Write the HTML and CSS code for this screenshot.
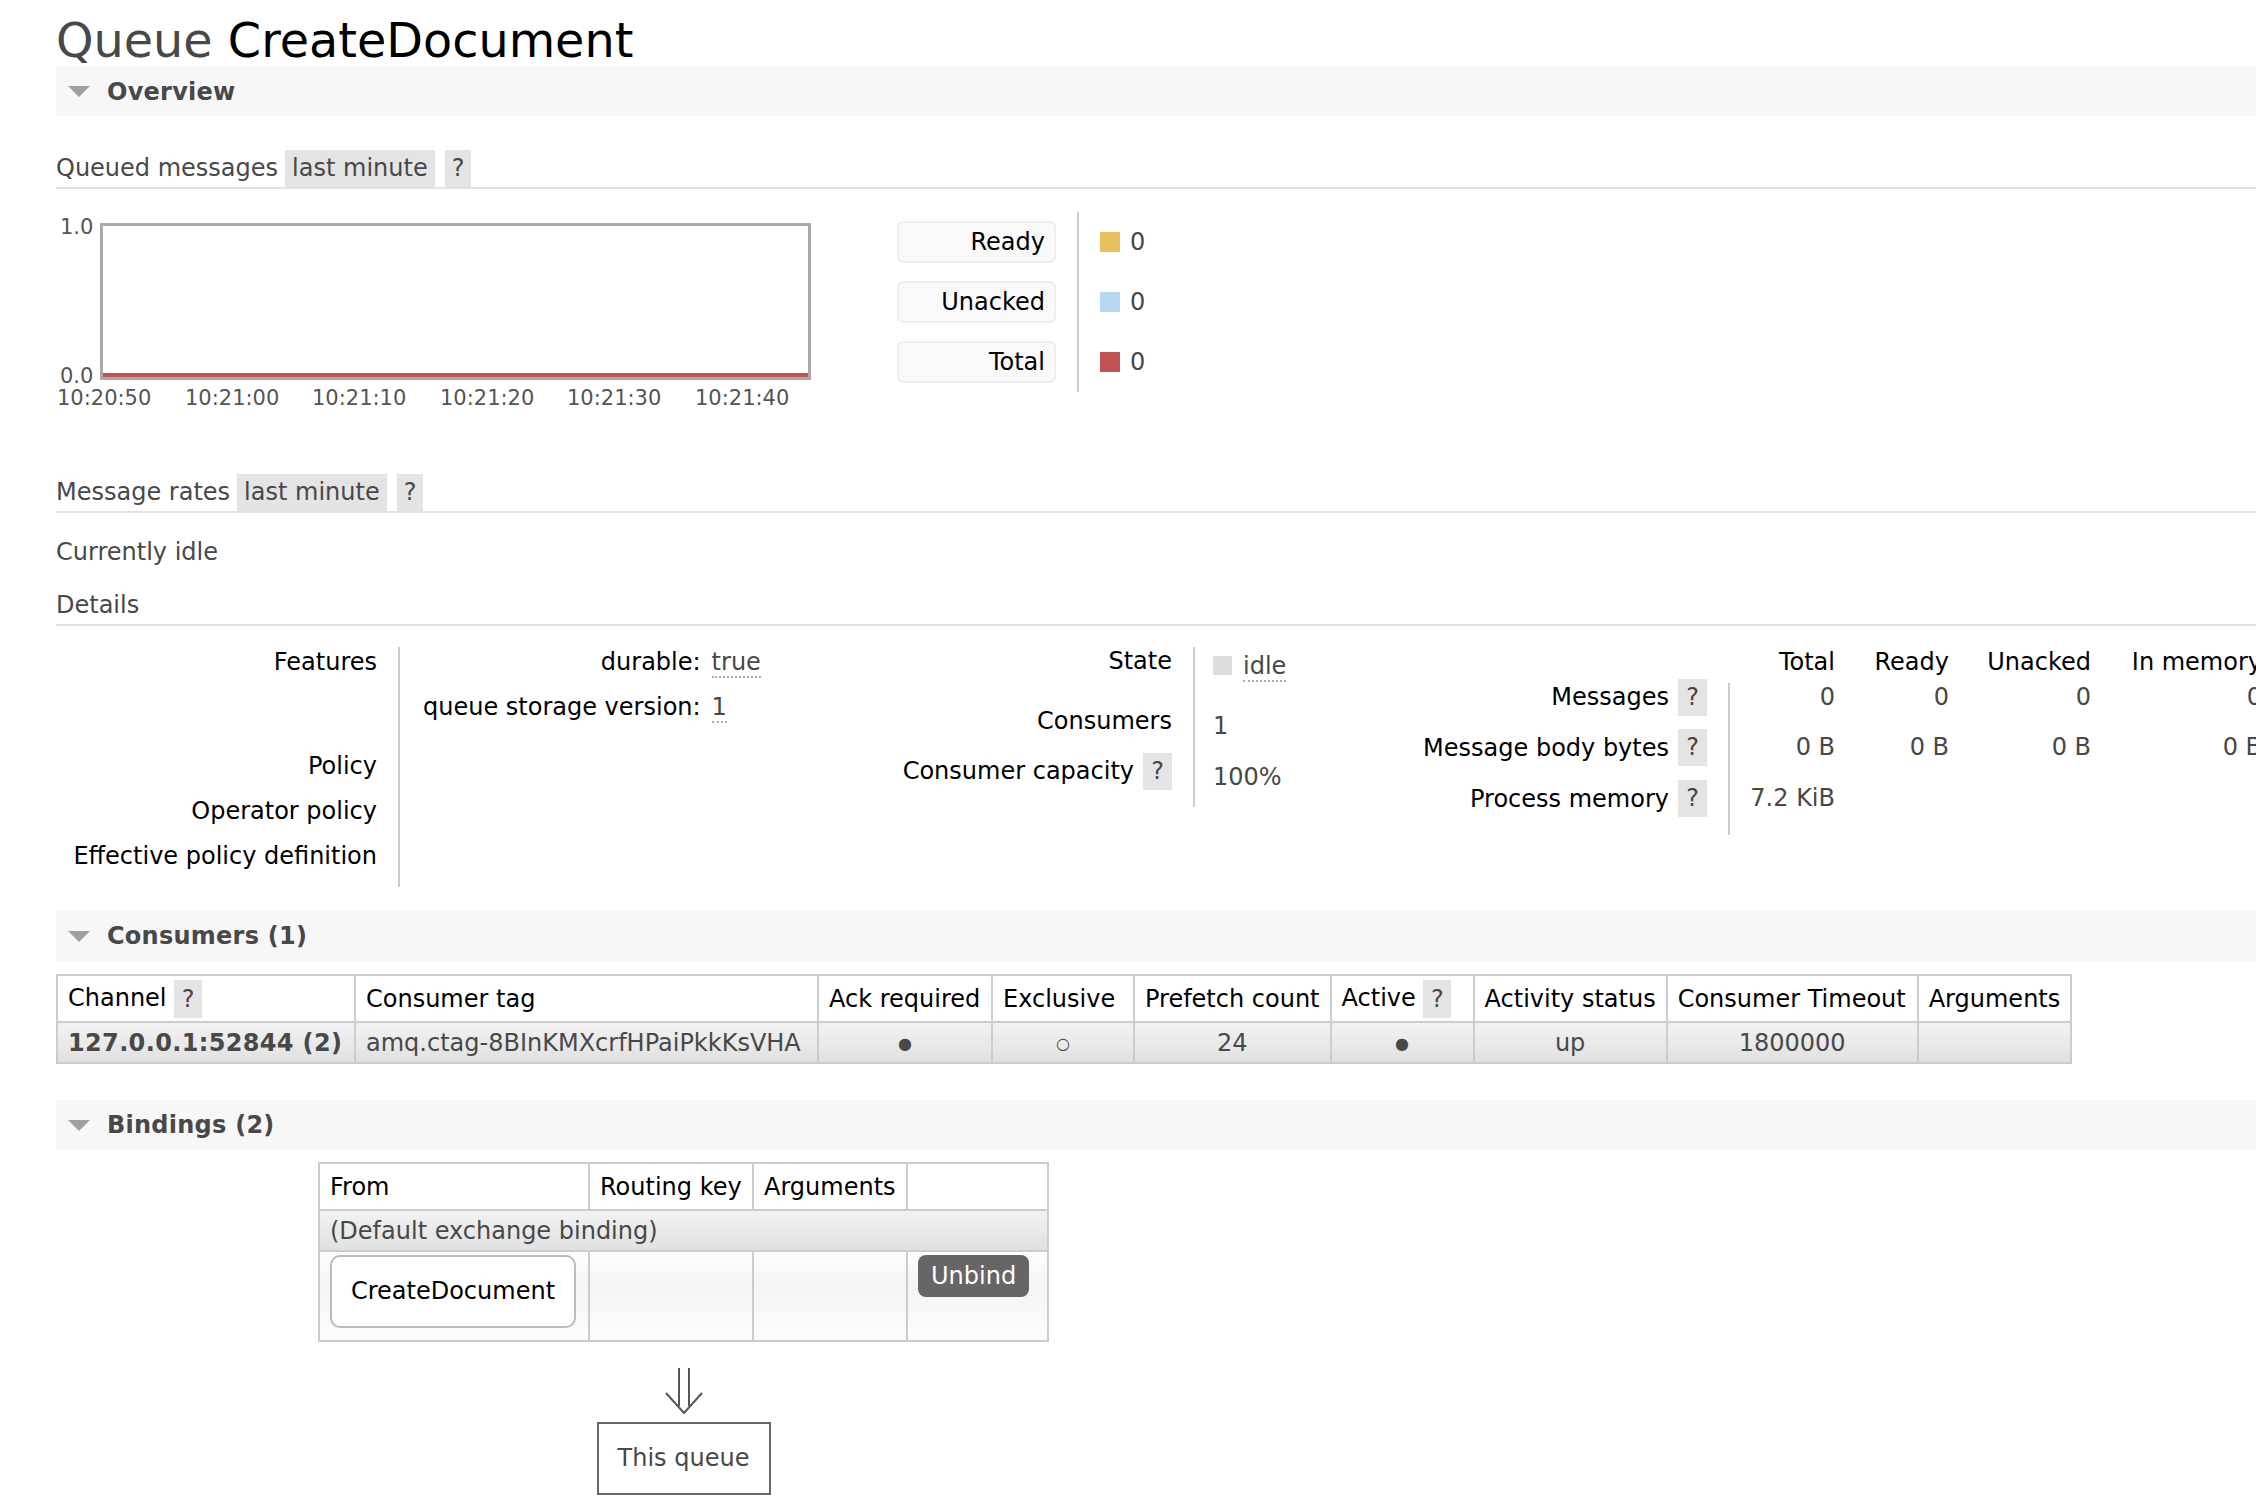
FILE: index.html
```html
<!DOCTYPE html>
<html>
<head>
<meta charset="utf-8">
<title>RabbitMQ Management: Queue CreateDocument</title>
<link rel="stylesheet" href="styles.css">
</head>
<body>
<div class="page">
  <h1><span class="h1-pre">Queue</span> <span class="h1-name">CreateDocument</span></h1>

  <div class="section-bar"><span class="tri"></span><span class="section-title">Overview</span></div>

  <div class="hd hd-queued">
    <span class="hd-label">Queued messages</span><span class="hd-box">last minute</span><span class="hd-box help">?</span>
  </div>

  <div class="chart-row">
    <svg class="chart" width="755" height="200" viewBox="0 0 755 200">
      <rect x="45.5" y="13.5" width="708" height="154" fill="#fff" stroke="#aaa" stroke-width="3"/>
      <rect x="47" y="162" width="705" height="4" fill="#c05252"/>
      <g class="axis">
        <text x="4" y="23">1.0</text>
        <text x="4" y="172">0.0</text>
        <text x="1" y="194">10:20:50</text>
        <text x="129" y="194">10:21:00</text>
        <text x="256" y="194">10:21:10</text>
        <text x="384" y="194">10:21:20</text>
        <text x="511" y="194">10:21:30</text>
        <text x="639" y="194">10:21:40</text>
      </g>
    </svg>
    <div class="legend">
      <div class="lg-labels">
        <div class="lg-label">Ready</div>
        <div class="lg-label">Unacked</div>
        <div class="lg-label">Total</div>
      </div>
      <div class="lg-values">
        <div class="lg-value"><span class="sw sw-ready"></span>0</div>
        <div class="lg-value"><span class="sw sw-unacked"></span>0</div>
        <div class="lg-value"><span class="sw sw-total"></span>0</div>
      </div>
    </div>
  </div>

  <div class="hd hd-rates">
    <span class="hd-label">Message rates</span><span class="hd-box">last minute</span><span class="hd-box help">?</span>
  </div>

  <p class="idle">Currently idle</p>

  <div class="hd hd-details"><span class="hd-label">Details</span></div>

  <div class="details">
    <div class="facts facts1">
      <div class="fl fl-features">Features</div>
      <div class="fv fv-features">
        <div class="kv">
          <span class="k">durable:</span><span class="v"><abbr>true</abbr></span>
          <span class="k">queue storage version:</span><span class="v"><abbr>1</abbr></span>
        </div>
      </div>
      <div class="fl fl-row">Policy</div>
      <div class="fv fv-row"></div>
      <div class="fl fl-row">Operator policy</div>
      <div class="fv fv-row"></div>
      <div class="fl fl-row">Effective policy definition</div>
      <div class="fv fv-row fv-last"></div>
    </div>

    <div class="facts facts2">
      <div class="f2l f2l-1">State</div>
      <div class="f2v f2v-1"><span class="state-sq"></span><abbr>idle</abbr></div>
      <div class="f2l f2l-2">Consumers</div>
      <div class="f2v f2v-2">1</div>
      <div class="f2l f2l-3">Consumer capacity <span class="help-box">?</span></div>
      <div class="f2v f2v-3">100%</div>
    </div>

    <div class="facts facts3">
      <div class="f3h f3-c4">Total</div>
      <div class="f3h f3-c5">Ready</div>
      <div class="f3h f3-c6">Unacked</div>
      <div class="f3h f3-c7">In memory</div>

      <div class="f3l f3-r2">Messages <span class="help-box">?</span></div>
      <div class="f3div"></div>
      <div class="f3v f3-r2 f3-c4">0</div>
      <div class="f3v f3-r2 f3-c5">0</div>
      <div class="f3v f3-r2 f3-c6">0</div>
      <div class="f3v f3-r2 f3-c7">0</div>

      <div class="f3l f3-r3">Message body bytes <span class="help-box">?</span></div>
      <div class="f3v f3-r3 f3-c4">0 B</div>
      <div class="f3v f3-r3 f3-c5">0 B</div>
      <div class="f3v f3-r3 f3-c6">0 B</div>
      <div class="f3v f3-r3 f3-c7">0 B</div>

      <div class="f3l f3-r4">Process memory <span class="help-box">?</span></div>
      <div class="f3v f3-r4 f3-c4">7.2 KiB</div>
    </div>
  </div>

  <div class="section-bar bar-consumers"><span class="tri"></span><span class="section-title">Consumers (1)</span></div>

  <table class="list consumers">
    <colgroup>
      <col class="w-channel"><col class="w-tag"><col class="w-ack"><col class="w-excl"><col class="w-prefetch"><col class="w-active"><col class="w-status"><col class="w-timeout"><col class="w-args">
    </colgroup>
    <thead>
      <tr>
        <th>Channel <span class="help-box th-help">?</span></th>
        <th>Consumer tag</th>
        <th>Ack required</th>
        <th>Exclusive</th>
        <th>Prefetch count</th>
        <th>Active <span class="help-box th-help">?</span></th>
        <th>Activity status</th>
        <th>Consumer Timeout</th>
        <th>Arguments</th>
      </tr>
    </thead>
    <tbody>
      <tr class="alt1">
        <td class="chan">127.0.0.1:52844 (2)</td>
        <td>amq.ctag-8BInKMXcrfHPaiPkkKsVHA</td>
        <td class="c"><span class="dot">●</span></td>
        <td class="c"><span class="dot">○</span></td>
        <td class="c">24</td>
        <td class="c"><span class="dot">●</span></td>
        <td class="c">up</td>
        <td class="c">1800000</td>
        <td></td>
      </tr>
    </tbody>
  </table>

  <div class="section-bar bar-bindings"><span class="tri"></span><span class="section-title">Bindings (2)</span></div>

  <div class="bindings">
    <table class="list bind-table">
      <colgroup>
        <col class="w-from"><col class="w-rk"><col class="w-bargs"><col class="w-act">
      </colgroup>
      <thead>
        <tr><th>From</th><th>Routing key</th><th>Arguments</th><th></th></tr>
      </thead>
      <tbody>
        <tr class="alt1"><td colspan="4" class="default-binding">(Default exchange binding)</td></tr>
        <tr class="alt2">
          <td class="from-cell"><span class="exchange-box">CreateDocument</span></td>
          <td></td>
          <td></td>
          <td class="act-cell"><span class="unbind">Unbind</span></td>
        </tr>
      </tbody>
    </table>
    <svg class="arrow" width="40" height="46" viewBox="0 0 40 46">
      <path d="M15 0 V38 M25 0 V38 M2 25 L20 45 L38 25" fill="none" stroke="#555" stroke-width="2"/>
    </svg>
    <div class="this-queue">This queue</div>
  </div>
</div>
</body>
</html>
```

FILE: styles.css
```css
html, body {
  margin: 0;
  padding: 0;
  overflow: hidden;
  background: #fff;
}

body {
  font-family: "DejaVu Sans", Verdana, sans-serif;
  font-size: 24px;
  color: #484848;
}

.page {
  padding: 14px 0 0 56px;
}

h1 {
  margin: 0;
  font-size: 47.7px;
  font-weight: normal;
  line-height: 53px;
  white-space: nowrap;
}

.h1-pre { color: #484848; }
.h1-name { color: #000; }

.section-bar {
  height: 49px;
  background: #f7f7f7;
  display: flex;
  align-items: center;
  white-space: nowrap;
}

.tri {
  width: 0;
  height: 0;
  border-left: 11px solid transparent;
  border-right: 11px solid transparent;
  border-top: 11px solid #a0a0a0;
  margin-left: 12px;
  margin-right: 17px;
}

.section-title {
  font-weight: bold;
  color: #484848;
  letter-spacing: 0.25px;
}

/* sub headers */
.hd {
  display: flex;
  height: 37px;
  line-height: 37px;
  border-bottom: 2px solid #e2e2e2;
  white-space: nowrap;
}

.hd-queued { margin-top: 34px; }
.hd-rates { margin-top: 63px; }
.hd-details { margin-top: 20px; }

.hd-label { margin-right: 7px; }

.hd-box {
  background: #e4e4e4;
  padding: 0 7px;
}

.hd-box.help { margin-left: 10px; }

/* chart */
.chart-row {
  margin-top: 22px;
  display: flex;
  align-items: flex-start;
}

.chart { display: block; flex: none; }

.axis text {
  font-family: "DejaVu Sans", Verdana, sans-serif;
  font-size: 21px;
  fill: #545454;
}

.legend {
  margin-left: 86px;
  margin-top: 1px;
  display: flex;
}

.lg-labels {
  padding: 9px 21px 9px 0;
  border-right: 2px solid #ccc;
  display: flex;
  flex-direction: column;
  gap: 18px;
}

.lg-label {
  width: 159px;
  height: 42px;
  box-sizing: border-box;
  border: 2px solid #eeeeee;
  border-radius: 6px;
  background: #f9f9f9;
  text-align: right;
  padding-right: 9px;
  line-height: 38px;
  color: #000;
}

.lg-values {
  padding: 9px 0 9px 21px;
  display: flex;
  flex-direction: column;
  gap: 18px;
}

.lg-value {
  height: 42px;
  display: flex;
  align-items: center;
  color: #484848;
}

.sw {
  width: 20px;
  height: 20px;
  margin-right: 10px;
}
.sw-ready { background: #e6c15b; }
.sw-unacked { background: #b6d8f3; }
.sw-total { background: #c05252; }

.idle {
  margin: 24px 0 0;
  line-height: 30px;
}

/* details */
.details {
  margin-top: 21px;
  display: flex;
  align-items: flex-start;
  white-space: nowrap;
}

.facts { flex: none; display: grid; }

abbr {
  text-decoration: none;
  border-bottom: 2px dotted #aaa;
}

.facts1 {
  grid-template-columns: 342px 402px;
  grid-template-rows: 96px 45px 45px 54px;
}

.fl {
  text-align: right;
  padding-right: 21px;
  color: #000;
}

.fl-features { line-height: 30px; }
.fl-row { line-height: 44px; padding-top: 1px; }

.fv {
  border-left: 2px solid #ccc;
  padding-left: 23px;
}

.kv {
  display: grid;
  grid-template-columns: auto auto;
  justify-content: start;
  column-gap: 11px;
  row-gap: 15px;
  grid-auto-rows: 30px;
  line-height: 30px;
}

.kv .k { text-align: right; color: #000; }
.kv .v { color: #484848; }

.facts2 {
  grid-template-columns: 393px 200px;
  grid-template-rows: 55px 49px 56px;
}

.f2l {
  text-align: right;
  padding-right: 21px;
  color: #000;
  line-height: 26px;
  padding-top: 1px;
}
.f2l-2 { padding-top: 6px; }
.f2l-3 {
  padding-top: 2px;
  display: flex;
  justify-content: flex-end;
  align-items: center;
  height: 37px;
  line-height: 37px;
}

.f2v {
  border-left: 2px solid #ccc;
  padding-left: 18px;
  line-height: 26px;
  color: #484848;
}
.f2v-1 { padding-top: 6px; }
.f2v-2 { padding-top: 11px; }
.f2v-3 { padding-top: 13px; }

.state-sq {
  display: inline-block;
  width: 19px;
  height: 19px;
  background: #dddddd;
  margin-right: 11px;
  vertical-align: -1px;
}

.help-box {
  display: inline-block;
  background: #e4e4e4;
  width: 29px;
  height: 37px;
  line-height: 37px;
  text-align: center;
  color: #484848;
  margin-left: 9px;
}

.facts3 {
  grid-template-columns: 314px 21px 2px 105px 114px 142px 171px;
  grid-template-rows: 25px 50px 51px 51px;
}

.f3h {
  grid-row: 1;
  text-align: right;
  line-height: 30px;
  color: #000;
}

.f3-c4 { grid-column: 4; }
.f3-c5 { grid-column: 5; }
.f3-c6 { grid-column: 6; }
.f3-c7 { grid-column: 7; }
.f3-r2 { grid-row: 2; }
.f3-r3 { grid-row: 3; }
.f3-r4 { grid-row: 4; }

.f3l {
  grid-column: 1;
  display: flex;
  justify-content: flex-end;
  align-items: center;
  color: #000;
}

.f3div {
  grid-column: 3;
  grid-row: 2 / 5;
  background: #ccc;
  margin-top: 11px;
  margin-bottom: -11px;
}

.f3v {
  text-align: right;
  line-height: 50px;
  color: #484848;
}

/* lists */
.bar-consumers { margin-top: 24px; height: 50px; }
.bar-bindings { margin-top: 36px; height: 50px; }

table.list {
  border-collapse: collapse;
  table-layout: fixed;
  border: 2px solid #ccc;
  white-space: nowrap;
}

table.list th,
table.list td {
  border: 2px solid #ccc;
  padding: 0 10px;
  font-size: 24px;
  overflow: hidden;
}

table.list th {
  text-align: left;
  font-weight: normal;
  color: #000;
  height: 45px;
  background: #fff;
}

table.list td {
  height: 39px;
  color: #484848;
}

table.list tr.alt1 td {
  background: linear-gradient(#f2f2f2, #e1e1e1);
}

table.list tr.alt2 td {
  background: linear-gradient(#ffffff, #f4f4f4 35%, #fcfcfc);
}

.consumers { margin-top: 13px; }

.w-channel { width: 298px; }
.w-tag { width: 463px; }
.w-ack { width: 174px; }
.w-excl { width: 142px; }
.w-prefetch { width: 193px; }
.w-active { width: 143px; }
.w-status { width: 193px; }
.w-timeout { width: 251px; }
.w-args { width: 153px; }

.th-help {
  margin-left: 0;
  width: 28px;
  height: 38px;
  line-height: 38px;
  vertical-align: middle;
}

td.chan {
  font-weight: bold;
  color: #000;
  letter-spacing: 0.35px;
}

td.c { text-align: center; }

.dot {
  font-size: 16px;
  color: #484848;
  vertical-align: 2px;
}

.bindings {
  margin-top: 12px;
  margin-left: 262px;
  display: inline-flex;
  flex-direction: column;
  align-items: center;
}

.w-from { width: 270px; }
.w-rk { width: 164px; }
.w-bargs { width: 154px; }
.w-act { width: 141px; }

.bind-table th { height: 46px; }

.default-binding { color: #484848; }

.bind-table tr.alt2 td {
  height: 85px;
  vertical-align: top;
  padding-top: 3px;
  padding-bottom: 0;
}

.from-cell { padding-left: 10px; }

.exchange-box {
  display: block;
  width: 246px;
  height: 73px;
  box-sizing: border-box;
  border: 2px solid #bbb;
  border-radius: 10px;
  background: #fff;
  color: #000;
  text-align: center;
  line-height: 69px;
}

.act-cell { padding-left: 9px; }

.unbind {
  display: inline-block;
  background: #666;
  color: #fff;
  border-radius: 8px;
  height: 42px;
  line-height: 42px;
  padding: 0 13px;
}

.arrow {
  display: block;
  margin-top: 26px;
}

.this-queue {
  margin-top: 8px;
  width: 174px;
  height: 73px;
  box-sizing: border-box;
  border: 2px solid #666;
  text-align: center;
  line-height: 69px;
  color: #484848;
}
```
